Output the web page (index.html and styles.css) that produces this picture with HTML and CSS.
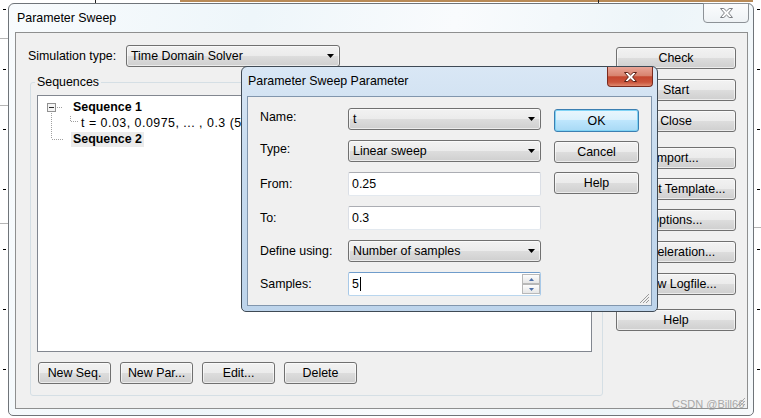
FILE: index.html
```html
<!DOCTYPE html>
<html lang="en">
<head>
    <meta charset="UTF-8">
    <meta name="viewport" content="width=device-width, initial-scale=1.0">
    <title>Parameter Sweep</title>
    <link rel="stylesheet" href="styles.css">
</head>
<body>
    <div class="desk-strip"></div>
    <div class="desk-tick tick-a"></div>
    <div class="desk-tick tick-b"></div>
    <div class="rail rail-left"></div>
    <div class="rail rail-right"></div>
    <div class="desk-line line-1"></div>
    <div class="desk-line line-2"></div>
    <div class="desk-line line-3"></div>
    <div class="desk-line line-4"></div>

    <div class="window main">
        <div class="titlebar">
            <span class="title">Parameter Sweep</span>
            <button class="cap-close">
                <svg width="13" height="10" viewBox="0 0 13 10"><polygon points="0.5,0.5 3.8,0.5 6.5,3 9.2,0.5 12.5,0.5 8.6,5 12.5,9.5 9.2,9.5 6.5,7 3.8,9.5 0.5,9.5 4.4,5" fill="#fdfdfd" stroke="#7c7f83"/></svg>
            </button>
        </div>
        <div class="client">
            <div class="left-col">
                <div class="sim-row">
                    <span class="sim-label">Simulation type:</span>
                    <div class="combo sim-combo">
                        <span>Time Domain Solver</span>
                        <svg class="arrow" width="7" height="4" viewBox="0 0 7 4"><polygon points="0,0 7,0 3.5,4" fill="#000"/></svg>
                    </div>
                </div>
                <fieldset class="group">
                    <legend>Sequences</legend>
                    <div class="tree">
                        <div class="node">
                            <svg width="33" height="16" viewBox="0 0 33 16">
                                <rect x="9.5" y="4.5" width="8" height="8" fill="#f4f4f4" stroke="#919191"/>
                                <line x1="11" y1="8.5" x2="16" y2="8.5" stroke="#2b2b2b"/>
                                <line x1="19" y1="8.5" x2="25" y2="8.5" stroke="#a0a0a0" stroke-dasharray="1 1"/>
                                <line x1="13.5" y1="14" x2="13.5" y2="16" stroke="#a0a0a0" stroke-dasharray="1 1"/>
                            </svg>
                            <span class="node-text bold">Sequence 1</span>
                        </div>
                        <div class="node">
                            <svg width="43" height="16" viewBox="0 0 43 16">
                                <line x1="13.5" y1="0" x2="13.5" y2="16" stroke="#a0a0a0" stroke-dasharray="1 1"/>
                                <line x1="32.5" y1="1" x2="32.5" y2="6" stroke="#a0a0a0" stroke-dasharray="1 1"/>
                                <line x1="33" y1="6.5" x2="41" y2="6.5" stroke="#a0a0a0" stroke-dasharray="1 1"/>
                            </svg>
                            <span class="node-text wide">t = 0.03, 0.0975, ... , 0.3 (5</span>
                        </div>
                        <div class="node">
                            <svg width="33" height="16" viewBox="0 0 33 16">
                                <line x1="13.5" y1="0" x2="13.5" y2="8" stroke="#a0a0a0" stroke-dasharray="1 1"/>
                                <line x1="14" y1="8.5" x2="25" y2="8.5" stroke="#a0a0a0" stroke-dasharray="1 1"/>
                            </svg>
                            <span class="node-text bold selected">Sequence 2</span>
                        </div>
                    </div>
                    <div class="seq-buttons">
                        <button class="btn">New Seq.</button>
                        <button class="btn">New Par...</button>
                        <button class="btn">Edit...</button>
                        <button class="btn">Delete</button>
                    </div>
                </fieldset>
            </div>
            <div class="side-col">
                <button class="btn">Check</button>
                <button class="btn gap-10">Start</button>
                <button class="btn gap-9">Close</button>
                <button class="btn gap-15">Import...</button>
                <button class="btn gap-9">Result Template...</button>
                <button class="btn gap-9">Options...</button>
                <button class="btn gap-10">Acceleration...</button>
                <button class="btn gap-10">Show Logfile...</button>
                <button class="btn gap-14">Help</button>
            </div>
            <svg class="grip main-grip" width="11" height="11" viewBox="0 0 11 11">
                <line x1="10" y1="2" x2="2" y2="10" stroke="#a8a8a8"/>
                <line x1="10" y1="5" x2="5" y2="10" stroke="#a8a8a8"/>
                <line x1="10" y1="8" x2="8" y2="10" stroke="#a8a8a8"/>
            </svg>
        </div>
    </div>

    <div class="window dialog">
        <div class="titlebar">
            <span class="title">Parameter Sweep Parameter</span>
            <button class="red-close">
                <svg width="13" height="10" viewBox="0 0 13 10"><polygon points="0.5,0.5 3.8,0.5 6.5,3 9.2,0.5 12.5,0.5 8.6,5 12.5,9.5 9.2,9.5 6.5,7 3.8,9.5 0.5,9.5 4.4,5" fill="#ffffff" stroke="#5b2116"/></svg>
            </button>
        </div>
        <div class="panel">
            <div class="form-col">
                <div class="form-row">
                    <span class="form-label raised">Name:</span>
                    <div class="combo field">
                        <span>t</span>
                        <svg class="arrow" width="7" height="4" viewBox="0 0 7 4"><polygon points="0,0 7,0 3.5,4" fill="#000"/></svg>
                    </div>
                </div>
                <div class="form-row">
                    <span class="form-label raised">Type:</span>
                    <div class="combo field">
                        <span>Linear sweep</span>
                        <svg class="arrow" width="7" height="4" viewBox="0 0 7 4"><polygon points="0,0 7,0 3.5,4" fill="#000"/></svg>
                    </div>
                </div>
                <div class="form-row">
                    <span class="form-label">From:</span>
                    <div class="textbox field">0.25</div>
                </div>
                <div class="form-row">
                    <span class="form-label">To:</span>
                    <div class="textbox field">0.3</div>
                </div>
                <div class="form-row">
                    <span class="form-label">Define using:</span>
                    <div class="combo field">
                        <span>Number of samples</span>
                        <svg class="arrow" width="7" height="4" viewBox="0 0 7 4"><polygon points="0,0 7,0 3.5,4" fill="#000"/></svg>
                    </div>
                </div>
                <div class="form-row">
                    <span class="form-label">Samples:</span>
                    <div class="textbox field focused">
                        <span>5</span><span class="caret"></span>
                        <div class="spin">
                            <span><svg width="5" height="3" viewBox="0 0 5 3"><polygon points="2.5,0 5,3 0,3" fill="#4d6fa8"/></svg></span>
                            <span><svg width="5" height="3" viewBox="0 0 5 3"><polygon points="0,0 5,0 2.5,3" fill="#4d6fa8"/></svg></span>
                        </div>
                    </div>
                </div>
            </div>
            <div class="dlg-buttons">
                <button class="btn default">OK</button>
                <button class="btn">Cancel</button>
                <button class="btn">Help</button>
            </div>
            <svg class="grip dlg-grip" width="11" height="11" viewBox="0 0 11 11">
                <line x1="10" y1="1" x2="1" y2="10" stroke="#9a9a9a"/>
                <line x1="10" y1="4" x2="4" y2="10" stroke="#9a9a9a"/>
                <line x1="10" y1="7" x2="7" y2="10" stroke="#9a9a9a"/>
            </svg>
        </div>
    </div>

    <span class="watermark">CSDN @Bill66</span>
</body>
</html>
```

FILE: styles.css
```css
* {
    box-sizing: border-box;
}

html, body {
    margin: 0;
    padding: 0;
}

body {
    position: relative;
    width: 761px;
    height: 418px;
    overflow: hidden;
    background: #fff;
    font-family: "Liberation Sans", Arial, sans-serif;
    font-size: 12.4px;
    color: #000;
}

/* desktop bits around the window */
.desk-strip {
    position: absolute;
    left: 180px;
    top: 0;
    width: 573px;
    height: 2px;
    background: #b88a57;
}

.desk-tick {
    position: absolute;
    top: 0;
    width: 1px;
    height: 4px;
    background: #222;
}

.tick-a { left: 95px; }
.tick-b { left: 598px; }

.rail {
    position: absolute;
    top: 0;
    width: 3px;
    height: 418px;
    background: repeating-linear-gradient(to bottom, transparent 0 9px, #000 9px 10px, transparent 10px 60px);
}

.rail-left { left: 3px; }
.rail-right { left: 757px; }

.desk-line {
    position: absolute;
    width: 8px;
    height: 1px;
    background: #b5b5b5;
}

.line-1 { left: 0; top: 38px; }
.line-2 { left: 0; top: 105px; }
.line-3 { left: 0; top: 223px; }
.line-4 { left: 754px; top: 227px; }

/* windows */
.window {
    position: absolute;
    display: flex;
    flex-direction: column;
    border: 1px solid #6f7479;
    border-radius: 6px 6px 5px 5px;
}

.main {
    left: 8px;
    top: 3px;
    width: 746px;
    height: 413px;
    background: linear-gradient(100deg, #f8fbfd 0%, #eef6fa 30%, #f9fbfd 55%, #edf5f9 80%, #f6f9fb 100%);
}

.titlebar {
    display: flex;
    align-items: flex-start;
    flex: none;
}

.main .titlebar {
    height: 28px;
}

.title {
    line-height: 14px;
    white-space: nowrap;
}

.main .title {
    padding: 7px 0 0 8px;
}

.cap-close, .red-close {
    display: flex;
    align-items: center;
    justify-content: center;
    width: 46px;
    height: 20px;
    margin-left: auto;
    padding: 0;
    border-radius: 0 0 4px 4px;
}

.cap-close {
    margin-top: -1px;
    margin-right: 4px;
    border: 1px solid #8d9297;
    background: linear-gradient(#fbfcfd, #eef2f5);
}

.client {
    position: relative;
    flex: 1;
    display: flex;
    margin: 0 5px 6px 6px;
    padding-top: 12px;
    border: 1px solid #8e8f8f;
    background: #f0f0f0;
}

.left-col {
    display: flex;
    flex-direction: column;
}

.sim-row {
    display: flex;
    align-items: center;
    height: 22px;
    padding-left: 12px;
}

.sim-label {
    width: 98px;
}

.sim-combo {
    width: 214px;
}

.combo {
    display: flex;
    align-items: center;
    height: 22px;
    padding-left: 4px;
    border: 1px solid #707070;
    border-radius: 3px;
    background: linear-gradient(#f2f2f2 0%, #ebebeb 50%, #dddddd 50%, #cfcfcf 100%);
    box-shadow: inset 0 0 0 1px rgba(255, 255, 255, 0.6);
    white-space: nowrap;
}

.arrow {
    margin-left: auto;
    margin-right: 5px;
}

.group {
    width: 573px;
    min-width: 0;
    margin: 8px 0 0 14px;
    padding: 6px 10px 11px 6px;
    border: 1px solid #d5dfe5;
    border-radius: 3px;
}

.group legend {
    margin-left: -2px;
    padding: 0 2px;
    line-height: 14px;
}

.tree {
    height: 257px;
    padding-top: 3px;
    border: 1px solid #828790;
    background: #fff;
    overflow: hidden;
}

.node {
    display: flex;
    align-items: center;
    height: 16px;
    white-space: nowrap;
}

.node svg {
    flex: none;
}

.node-text {
    line-height: 15px;
}

.node-text.wide {
    letter-spacing: 0.5px;
}

.bold {
    font-weight: bold;
    padding: 0 2px;
}

.selected {
    background: #ebebeb;
}

.seq-buttons {
    display: flex;
    gap: 9px;
    margin-top: 10px;
    padding-left: 1px;
}

.seq-buttons .btn {
    width: 73px;
}

.btn {
    height: 22px;
    padding: 0;
    border: 1px solid #707070;
    border-radius: 3px;
    background: linear-gradient(#f2f2f2 0%, #ebebeb 50%, #dddddd 50%, #cfcfcf 100%);
    box-shadow: inset 0 0 0 1px rgba(255, 255, 255, 0.6);
    font-family: "Liberation Sans", Arial, sans-serif;
    font-size: 12.4px;
    color: #000;
    white-space: nowrap;
}

.side-col {
    display: flex;
    flex-direction: column;
    width: 120px;
    margin-left: 13px;
    padding-top: 2px;
}

.gap-9 { margin-top: 9px; }
.gap-10 { margin-top: 10px; }
.gap-14 { margin-top: 14px; }
.gap-15 { margin-top: 15px; }

.grip {
    position: absolute;
    right: 1px;
    bottom: 1px;
}

/* dialog */
.dialog {
    left: 241px;
    top: 66px;
    width: 417px;
    height: 246px;
    border-color: #3f4a55;
    background: linear-gradient(#d9e7f5 0%, #c8dcef 35%, #bdd4eb 100%);
}

.dialog .titlebar {
    height: 29px;
}

.dialog .title {
    padding: 7px 0 0 6px;
}

.red-close {
    margin-right: 4px;
    border: 1px solid #7a2b1e;
    border-top: none;
    background: linear-gradient(#e9a597 0%, #d8846f 45%, #c4462e 52%, #cb553c 80%, #e08a6f 100%);
}

.panel {
    position: relative;
    flex: 1;
    display: flex;
    margin: 0 5px 5px 5px;
    padding: 11px 0 0 12px;
    border: 1px solid #8196ad;
    background: #f0f0f0;
}

.form-col {
    display: flex;
    flex-direction: column;
    gap: 10px;
}

.form-row {
    display: flex;
    align-items: center;
}

.form-label {
    width: 88px;
}

.form-label.raised {
    margin-bottom: 5px;
}

.field {
    width: 193px;
}

.textbox {
    display: flex;
    align-items: center;
    height: 24px;
    padding-left: 3px;
    border: 1px solid #dbdfe6;
    border-top-color: #abadb3;
    border-bottom-color: #e3e9ef;
    border-radius: 2px;
    background: #fff;
}

.textbox.focused {
    border-color: #a8c9e8;
    border-top-color: #6f9ccb;
    border-bottom-color: #b9d6ee;
}

.caret {
    width: 1px;
    height: 14px;
    margin-left: 1px;
    background: #000;
}

.spin {
    display: flex;
    flex-direction: column;
    align-self: stretch;
    margin-left: auto;
    padding: 1px 0;
}

.spin span {
    display: flex;
    align-items: center;
    justify-content: center;
    width: 18px;
    height: 10px;
    border: 1px solid #b8b8b8;
    background: linear-gradient(#fdfdfd, #e6e6e6);
}

.dlg-buttons {
    display: flex;
    flex-direction: column;
    gap: 9px;
    width: 85px;
    margin-left: 13px;
    padding-top: 1px;
}

.btn.default {
    height: 23px;
    border-color: #3c7fb1;
    background: linear-gradient(#eaf6fd 0%, #d9f0fc 50%, #bee6fd 50%, #a7d9f5 100%);
    box-shadow: inset 0 0 0 1px #7fd3f5;
}

.watermark {
    position: absolute;
    left: 672px;
    top: 398px;
    font-size: 11px;
    line-height: 13px;
    color: #a9a9a9;
}
```
